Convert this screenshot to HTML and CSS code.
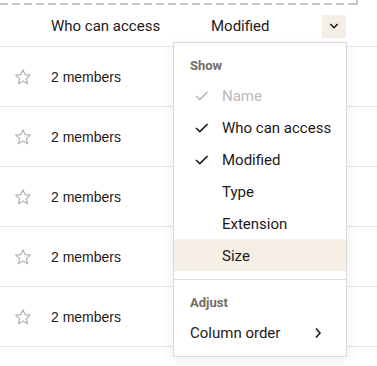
FILE: index.html
```html
<!DOCTYPE html>
<html>
<head>
<meta charset="utf-8">
<link rel="stylesheet" href="styles.css">
</head>
<body>
<div class="page">
  <div class="drop"></div>
  <div class="header">
    <div class="c-star"></div>
    <div class="c-access">Who can access</div>
    <div class="c-mod">Modified</div>
    <button class="c-btn" aria-label="Columns">
      <svg width="10" height="6" viewBox="0 0 10 6"><path d="M1.3 1 L5 4.7 L8.7 1" fill="none" stroke="#1e1919" stroke-width="1.6"/></svg>
    </button>
  </div>
  <div class="row"><div class="c-star"><svg class="star" viewBox="0 0 18 18" width="18" height="18"><path d="M9 1.8 L11.1 6.6 L16.3 7.1 L12.4 10.6 L13.5 15.7 L9 13.1 L4.5 15.7 L5.6 10.6 L1.7 7.1 L6.9 6.6 Z" fill="none" stroke="#b5b1ab" stroke-width="1.2" stroke-linejoin="round"/></svg></div><div class="r-text">2 members</div></div>
  <div class="row"><div class="c-star"><svg class="star" viewBox="0 0 18 18" width="18" height="18"><path d="M9 1.8 L11.1 6.6 L16.3 7.1 L12.4 10.6 L13.5 15.7 L9 13.1 L4.5 15.7 L5.6 10.6 L1.7 7.1 L6.9 6.6 Z" fill="none" stroke="#b5b1ab" stroke-width="1.2" stroke-linejoin="round"/></svg></div><div class="r-text">2 members</div></div>
  <div class="row"><div class="c-star"><svg class="star" viewBox="0 0 18 18" width="18" height="18"><path d="M9 1.8 L11.1 6.6 L16.3 7.1 L12.4 10.6 L13.5 15.7 L9 13.1 L4.5 15.7 L5.6 10.6 L1.7 7.1 L6.9 6.6 Z" fill="none" stroke="#b5b1ab" stroke-width="1.2" stroke-linejoin="round"/></svg></div><div class="r-text">2 members</div></div>
  <div class="row"><div class="c-star"><svg class="star" viewBox="0 0 18 18" width="18" height="18"><path d="M9 1.8 L11.1 6.6 L16.3 7.1 L12.4 10.6 L13.5 15.7 L9 13.1 L4.5 15.7 L5.6 10.6 L1.7 7.1 L6.9 6.6 Z" fill="none" stroke="#b5b1ab" stroke-width="1.2" stroke-linejoin="round"/></svg></div><div class="r-text">2 members</div></div>
  <div class="row"><div class="c-star"><svg class="star" viewBox="0 0 18 18" width="18" height="18"><path d="M9 1.8 L11.1 6.6 L16.3 7.1 L12.4 10.6 L13.5 15.7 L9 13.1 L4.5 15.7 L5.6 10.6 L1.7 7.1 L6.9 6.6 Z" fill="none" stroke="#b5b1ab" stroke-width="1.2" stroke-linejoin="round"/></svg></div><div class="r-text">2 members</div></div>

  <div class="menu">
    <div class="m-label">Show</div>
    <div class="m-item disabled"><span class="m-ico"><svg width="14" height="10" viewBox="0 0 14 10"><path d="M1 5 L4.8 8.6 L12.6 1" fill="none" stroke="#bdb8b2" stroke-width="1.6"/></svg></span>Name</div>
    <div class="m-item"><span class="m-ico"><svg width="14" height="10" viewBox="0 0 14 10"><path d="M1 5 L4.8 8.6 L12.6 1" fill="none" stroke="#1e1919" stroke-width="1.6"/></svg></span>Who can access</div>
    <div class="m-item"><span class="m-ico"><svg width="14" height="10" viewBox="0 0 14 10"><path d="M1 5 L4.8 8.6 L12.6 1" fill="none" stroke="#1e1919" stroke-width="1.6"/></svg></span>Modified</div>
    <div class="m-item"><span class="m-ico"></span>Type</div>
    <div class="m-item"><span class="m-ico"></span>Extension</div>
    <div class="m-item active"><span class="m-ico"></span>Size</div>
    <div class="m-sep"></div>
    <div class="m-label">Adjust</div>
    <div class="m-item sub">Column order<svg width="8" height="12" viewBox="0 0 8 12"><path d="M2 1.5 L6 6 L2 10.5" fill="none" stroke="#1e1919" stroke-width="1.6"/></svg></div>
  </div>
</div>
</body>
</html>
```
FILE: styles.css
```css
html, body {
  margin: 0;
  padding: 0;
  background: #fff;
}
.page {
  position: relative;
  width: 377px;
  height: 366px;
  overflow: hidden;
  font-family: Roboto, "Liberation Sans", sans-serif;
  color: #1e1919;
}
.drop {
  width: 358px;
  height: 5px;
  background:
    repeating-linear-gradient(90deg, #c8c4be 0 8px, transparent 8px 12px) left bottom / 356px 2px no-repeat,
    linear-gradient(#c8c4be, #c8c4be) right top / 2px 5px no-repeat;
}
.header {
  display: flex;
  align-items: center;
  height: 42px;
  box-sizing: border-box;
  padding-top: 1px;
  border-bottom: 1px solid #e9e6e1;
  font-size: 15px;
}
.c-star {
  width: 51px;
  flex: none;
  display: flex;
  align-items: center;
  padding-left: 14px;
  box-sizing: border-box;
}
.c-access {
  width: 160px;
  flex: none;
}
.c-mod {
  flex: 1;
}
.c-btn {
  width: 24px;
  height: 23px;
  margin-right: 31px;
  border: 0;
  padding: 0;
  background: #f4eee5;
  display: flex;
  align-items: center;
  justify-content: center;
  border-radius: 1px;
}
.row {
  display: flex;
  align-items: center;
  height: 59px;
  border-bottom: 1px solid #e9e6e1;
}
.r-text {
  font-family: "Liberation Sans", Arial, sans-serif;
  font-size: 14px;
  color: #1e1919;
}
.star {
  display: block;
}
.menu {
  position: absolute;
  left: 173px;
  top: 42px;
  width: 174px;
  box-sizing: border-box;
  background: #fff;
  border: 1px solid #dcd8d3;
  box-shadow: 0 4px 14px rgba(0, 0, 0, 0.07);
  padding: 8px 0;
  font-size: 15px;
}
.m-label {
  height: 28px;
  box-sizing: border-box;
  padding: 1px 0 0 16px;
  display: flex;
  align-items: center;
  font-size: 13px;
  font-weight: 700;
  color: #736c64;
}
.m-item {
  height: 32px;
  box-sizing: border-box;
  display: flex;
  align-items: center;
  padding: 1px 0 0 16px;
  color: #1e1919;
}
.m-item.disabled {
  color: #bdb8b2;
}
.m-item.active {
  background: #f5eee4;
}
.m-ico {
  width: 32px;
  flex: none;
  display: flex;
  align-items: center;
  padding-left: 5px;
  box-sizing: border-box;
}
.m-sep {
  height: 1px;
  background: #e1ddd8;
  margin: 8px 0;
}
.m-item.sub {
  justify-content: space-between;
  padding-right: 24px;
}
```
